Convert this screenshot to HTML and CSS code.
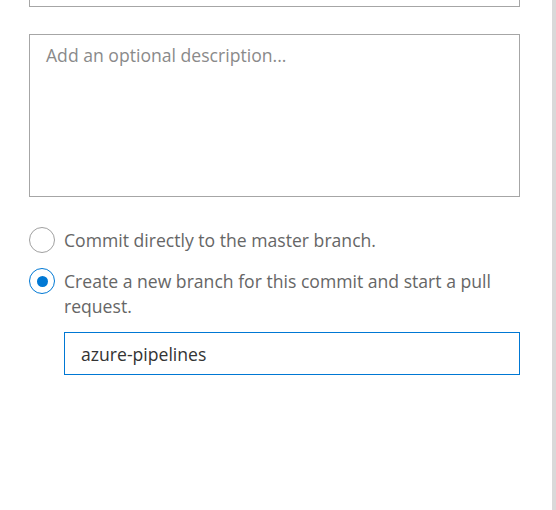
FILE: index.html
```html
<!DOCTYPE html>
<html>
<head>
<meta charset="utf-8">
<link rel="stylesheet" href="styles.css">
</head>
<body>
<div class="page">
  <div class="content">
    <div class="clipped-field"></div>
    <div class="textarea"><span class="placeholder">Add an optional description...</span></div>
    <div class="options">
      <div class="option">
        <span class="radio"></span>
        <span class="label">Commit directly to the master branch.</span>
      </div>
      <div class="option">
        <span class="radio checked"></span>
        <span class="label">Create a new branch for this commit and start a pull request.</span>
      </div>
    </div>
    <div class="branch-field">azure-pipelines</div>
  </div>
  <div class="scrollbar"></div>
</div>
</body>
</html>
```
FILE: styles.css
```css
html, body {
  margin: 0;
  padding: 0;
  background: #fff;
  font-family: "Open Sans", "Noto Sans", sans-serif;
}
.page {
  display: flex;
  height: 510px;
  width: 556px;
}
.content {
  width: 491px;
  margin-left: 29px;
  display: flex;
  flex-direction: column;
}
.scrollbar {
  width: 4px;
  margin-left: auto;
  background: #d9d9d9;
}
.clipped-field {
  height: 7px;
  box-sizing: border-box;
  border: 1px solid #a6a6a6;
  border-top: none;
  background: #fff;
}
.textarea {
  margin-top: 27px;
  height: 163px;
  box-sizing: border-box;
  border: 1px solid #a6a6a6;
  background: #fff;
  padding: 7px 16px;
}
.placeholder {
  font-size: 17.6px;
  line-height: 26px;
  color: #8a8a8a;
}
.options {
  margin-top: 31px;
  display: flex;
  flex-direction: column;
  gap: 16px;
}
.option {
  display: flex;
  align-items: flex-start;
  gap: 9px;
}
.radio {
  flex: none;
  width: 26px;
  height: 26px;
  box-sizing: border-box;
  border: 1px solid #a0a0a0;
  border-radius: 50%;
  background: #fff;
  margin-top: -1px;
  display: flex;
  align-items: center;
  justify-content: center;
}
.radio.checked {
  border-color: #0078d4;
}
.radio.checked::after {
  content: "";
  width: 11px;
  height: 11px;
  border-radius: 50%;
  background: #0078d4;
}
.label {
  font-size: 17.6px;
  line-height: 25px;
  color: #666;
}
.branch-field {
  margin-top: 13px;
  margin-left: 35px;
  height: 43px;
  box-sizing: border-box;
  border: 1px solid #0078d4;
  background: #fff;
  padding: 0 16px;
  display: flex;
  align-items: center;
  font-size: 17.6px;
  color: #333;
}
```
